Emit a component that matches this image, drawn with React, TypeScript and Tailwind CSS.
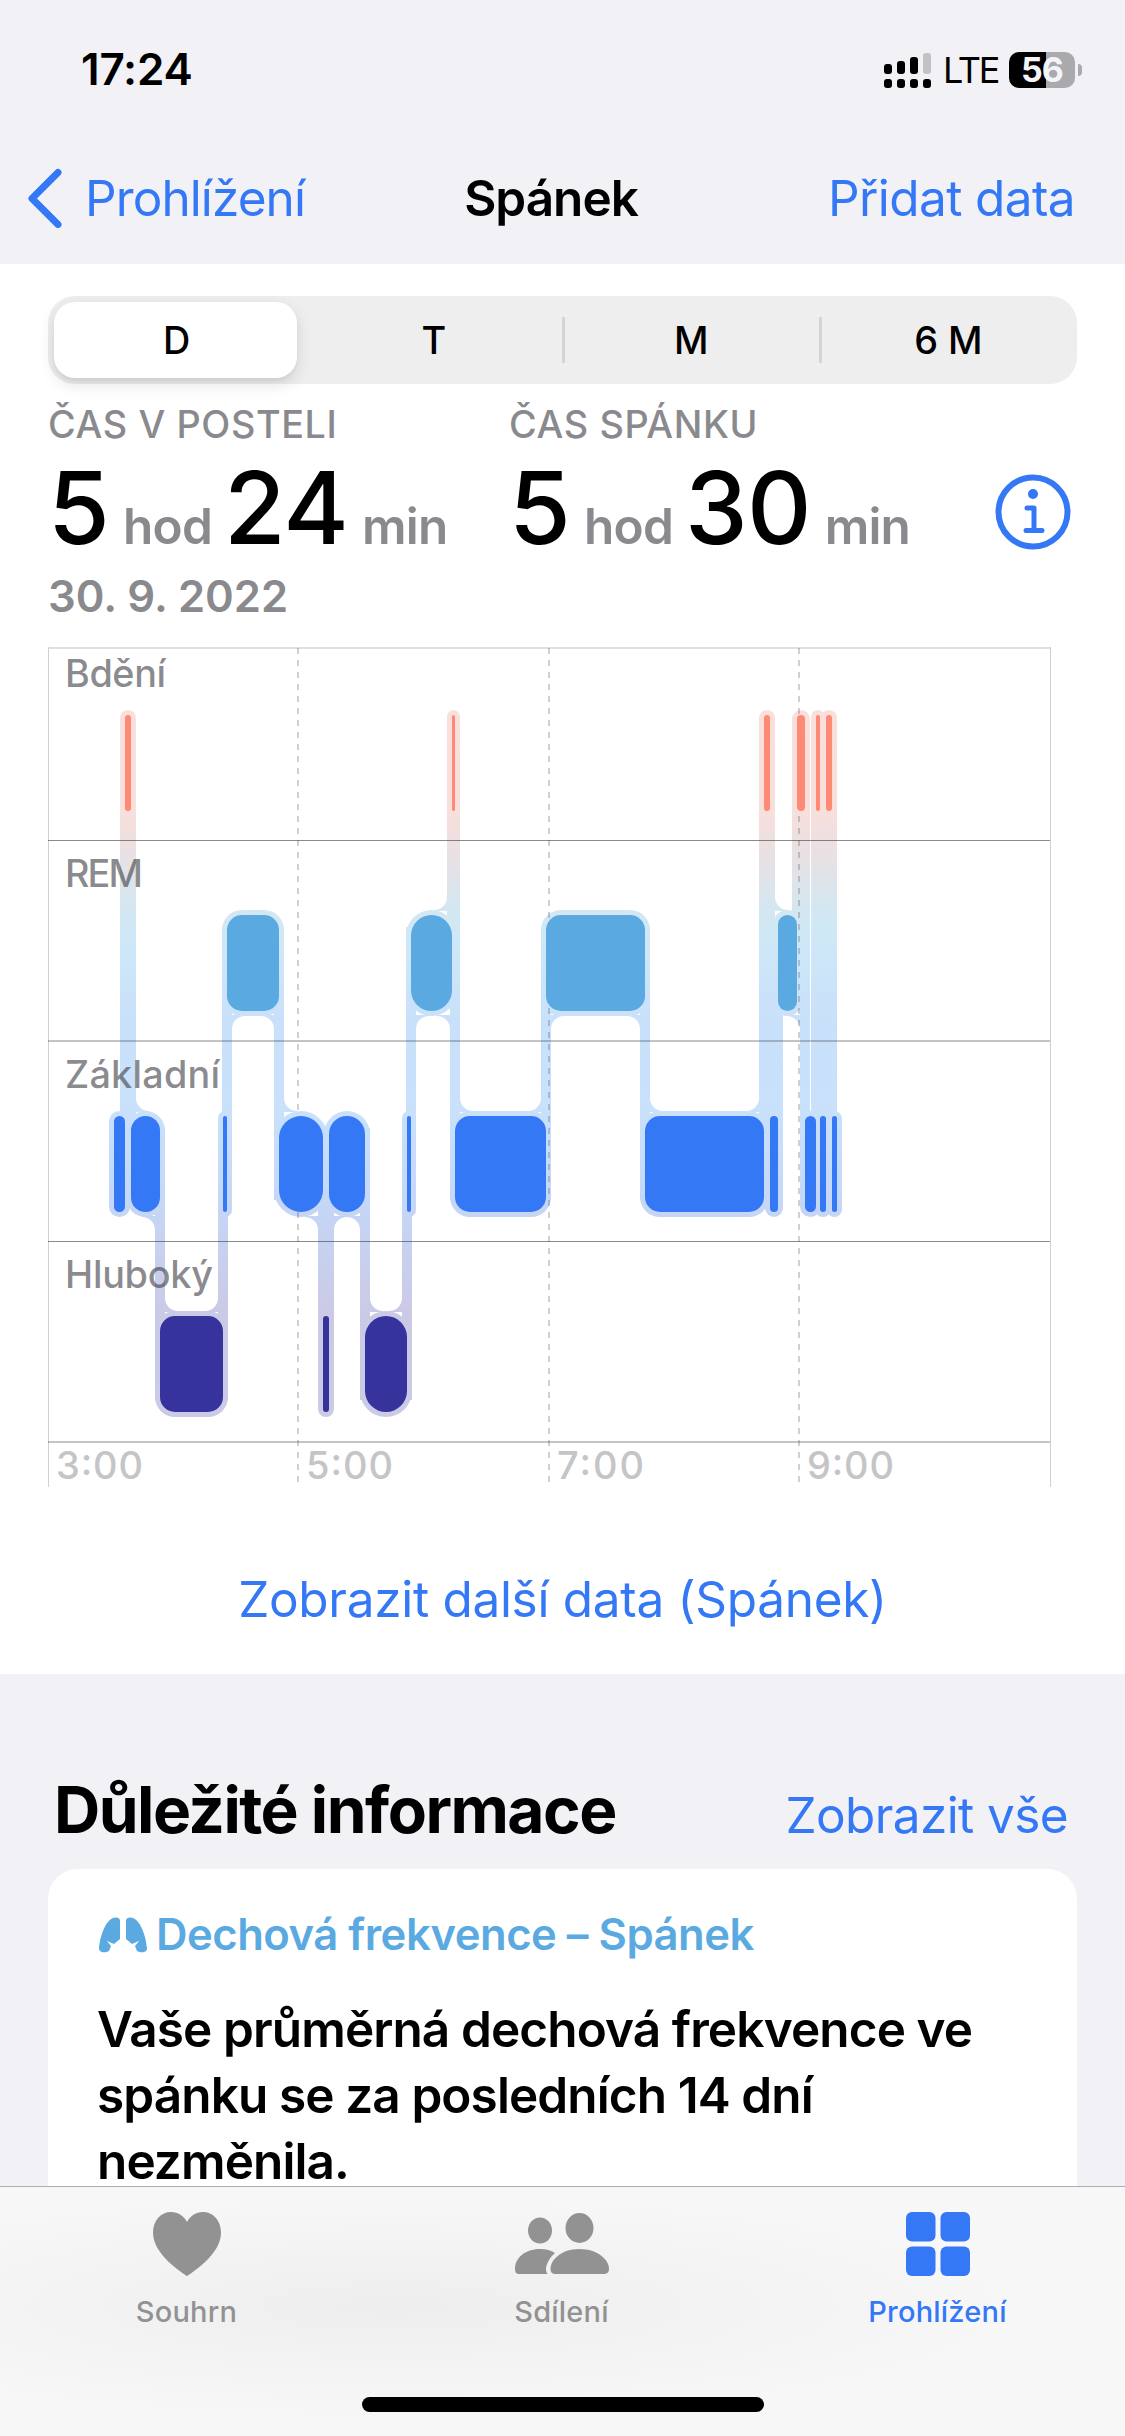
import type { ReactNode } from "react";

type Stage = "awake" | "rem" | "core" | "deep";

const stageTop: Record<Stage, number> = { awake: 68, rem: 268, core: 469, deep: 669 };
const stageColor: Record<Stage, string> = {
  awake: "#fe8a75",
  rem: "#5aaae1",
  core: "#3478f6",
  deep: "#36349c",
};

const BAR_H = 96;
const HALO = 5;
const FILLET = 13;

// stage, start x, end x
const segments: [Stage, number, number][] = [
  ["core", 66, 77],
  ["awake", 77, 83],
  ["core", 83, 112],
  ["deep", 112, 175],
  ["core", 175, 179],
  ["rem", 179, 231],
  ["core", 231, 275],
  ["deep", 275, 281],
  ["core", 281, 317],
  ["deep", 317, 359],
  ["core", 359, 363],
  ["rem", 363, 404],
  ["awake", 404, 407],
  ["core", 407, 498],
  ["rem", 498, 597],
  ["core", 597, 716],
  ["awake", 716, 722],
  ["core", 722, 730],
  ["rem", 730, 749],
  ["awake", 749, 757],
  ["core", 757, 768],
  ["awake", 768, 772],
  ["core", 772, 778],
  ["awake", 778, 784],
  ["core", 784, 789],
];

// inner corners: x, y, horizontal and vertical direction of the open side
const fillets: [number, number, number, number][] = [
  [88, 464, 1, -1],
  [107, 570, -1, 1],
  [117, 664, 1, -1],
  [170, 664, -1, -1],
  [184, 369, 1, 1],
  [226, 369, -1, 1],
  [236, 464, 1, -1],
  [270, 570, -1, 1],
  [286, 570, 1, 1],
  [312, 570, -1, 1],
  [322, 664, 1, -1],
  [354, 664, -1, -1],
  [368, 369, 1, 1],
  [402, 369, -1, 1],
  [399, 263, -1, -1],
  [412, 464, 1, -1],
  [493, 464, -1, -1],
  [503, 369, 1, 1],
  [592, 369, -1, 1],
  [602, 464, 1, -1],
  [711, 464, -1, -1],
  [727, 263, 1, -1],
  [752, 369, -1, 1],
];

const stageLabels = [
  { y: 40, width: 101, label: "Bdění" },
  { y: 240, width: 78, label: "REM" },
  { y: 441, width: 155, label: "Základní" },
  { y: 641, width: 148, label: "Hluboký" },
];

const hours = [
  { x: 8, label: "3:00" },
  { x: 258, label: "5:00" },
  { x: 509, label: "7:00" },
  { x: 759, label: "9:00" },
];

const ranges = ["D", "T", "M", "6 M"];

const totals = [
  { label: "ČAS V POSTELI", hours: "5", minutes: "24" },
  { label: "ČAS SPÁNKU", hours: "5", minutes: "30" },
];

function barRadius(width: number) {
  return width < 46 ? width / 2 : 15;
}

function filletPath([x, y, dx, dy]: [number, number, number, number]) {
  const sweep = dx * dy > 0 ? 0 : 1;
  return `M${x - dx} ${y - dy}V${y + dy * FILLET}H${x}A${FILLET} ${FILLET} 0 0 ${1 - sweep} ${x + dx * FILLET} ${y}V${y - dy}Z`;
}

function SleepChart() {
  return (
    <svg
      width="1003"
      height="842"
      viewBox="0 0 1003 842"
      className="block font-['Inter',sans-serif]"
      aria-label="Fáze spánku"
    >
      <defs>
        <linearGradient id="halo" gradientUnits="userSpaceOnUse" x1="0" y1="63" x2="0" y2="770">
          <stop offset="0" stopColor="#fadfdb" />
          <stop offset="0.14" stopColor="#f8dfdb" />
          <stop offset="0.2" stopColor="#eae0e3" />
          <stop offset="0.24" stopColor="#dfe4ea" />
          <stop offset="0.28" stopColor="#d3e7f1" />
          <stop offset="0.32" stopColor="#cfe8f7" />
          <stop offset="0.38" stopColor="#cce4f9" />
          <stop offset="0.44" stopColor="#c9e0fa" />
          <stop offset="0.56" stopColor="#c9e1fb" />
          <stop offset="0.66" stopColor="#c5dafa" />
          <stop offset="0.76" stopColor="#c7d1f0" />
          <stop offset="0.85" stopColor="#cbcae6" />
          <stop offset="1" stopColor="#cbcae7" />
        </linearGradient>
      </defs>

      <g fill="none">
        <path d="M0 1H1002" stroke="#e0e0e1" strokeWidth="2" />
        <path d="M0.5 0V840" stroke="#d1d1d4" />
        <path d="M1002.5 0V840" stroke="#d1d1d4" />
      </g>

      <g fill="url(#halo)">
        {segments.map(([stage, x0, x1]) => (
          <rect
            key={x0}
            x={x0 - HALO}
            y={stageTop[stage] - HALO}
            width={x1 - x0 + HALO * 2}
            height={BAR_H + HALO * 2}
            rx={barRadius(x1 - x0) + HALO}
          />
        ))}
        {segments.slice(1).map(([stage, x0], i) => {
          const a = stageTop[segments[i][0]];
          const b = stageTop[stage];
          const top = Math.min(a, b) + 12;
          const bottom = Math.max(a, b) + BAR_H - 12;
          return (
            <rect key={x0} x={x0 - HALO} y={top} width={HALO * 2} height={bottom - top} />
          );
        })}
        {fillets.map((f) => (
          <path key={`${f[0]}-${f[1]}`} d={filletPath(f)} />
        ))}
      </g>

      <g stroke="#3c3c43" strokeOpacity="0.24" strokeWidth="2" strokeDasharray="6 6">
        <path d="M250 1V835" />
        <path d="M501 1V835" />
        <path d="M751 1V835" />
      </g>
      <g stroke="#3c3c43">
        <path d="M0 193.5H1002" strokeOpacity="0.6" />
        <path d="M0 394H1002" strokeOpacity="0.3" strokeWidth="2" />
        <path d="M0 594.5H1002" strokeOpacity="0.6" />
        <path d="M0 795H1002" strokeOpacity="0.3" strokeWidth="2" />
      </g>

      {segments.map(([stage, x0, x1]) => (
        <rect
          key={x0}
          x={x0}
          y={stageTop[stage]}
          width={x1 - x0}
          height={BAR_H}
          rx={barRadius(x1 - x0)}
          fill={stageColor[stage]}
        />
      ))}

      <g fill="#3c3c43" fillOpacity="0.6" fontSize="37.8" fontWeight="500">
        {stageLabels.map((s) => (
          <text key={s.label} x="17" y={s.y} textLength={s.width}>
            {s.label}
          </text>
        ))}
      </g>
      <g fill="#c5c5c7" fontSize="38" fontWeight="500">
        {hours.map((h) => (
          <text key={h.label} x={h.x} y="832" textLength="87">
            {h.label}
          </text>
        ))}
      </g>
    </svg>
  );
}

function StatusBar() {
  return (
    <div className="flex h-[138px] items-start justify-between pt-[44px] pr-[43px] pl-[81px]">
      <span className="text-[44px] leading-[50px] font-semibold tracking-[-0.2px]">17:24</span>
      <div className="flex items-center">
        <svg width="48" height="50" viewBox="0 0 48 50" className="block">
          <rect x="0" y="19" width="8" height="10" rx="3" />
          <rect x="13" y="16" width="8" height="13" rx="3" />
          <rect x="26" y="12" width="8" height="17" rx="3" />
          <rect x="39" y="8" width="8" height="21" rx="3" fill="#c2c1c6" />
          <rect x="0" y="34" width="8" height="9" rx="3" />
          <rect x="13" y="34" width="8" height="9" rx="3" />
          <rect x="26" y="34" width="8" height="9" rx="3" />
          <rect x="39" y="34" width="8" height="9" rx="3" />
        </svg>
        <span className="ml-[11px] w-[66px] text-[36px] leading-[52px] tracking-[-2.2px]">LTE</span>
        <div className="flex h-[36px] w-[66px] items-center justify-center rounded-[10px] bg-linear-to-r from-black from-[56%] to-[#a9a9ae] to-[56%] text-[34px] leading-none font-bold tracking-[-1px] text-[#f4f4f7]">
          56
        </div>
        <span className="ml-[3px] h-[12px] w-[4px] rounded-r-full bg-[#a9a9ae]" />
      </div>
    </div>
  );
}

function NavBar() {
  return (
    <nav className="grid h-[126px] grid-cols-[1fr_auto_1fr] items-start pr-[50px] pl-[27px] text-[49.5px] leading-[120px] text-[#3478f6]">
      <a className="flex items-center">
        <svg width="36" height="60" viewBox="0 0 36 60" fill="none" className="mr-[22px] block">
          <path
            d="M31 4.500L5 30.500L31 56.500"
            stroke="#3478f6"
            strokeWidth="7"
            strokeLinecap="round"
            strokeLinejoin="round"
          />
        </svg>
        <span className="tracking-[-0.9px]">Prohlížení</span>
      </a>
      <h1 className="font-semibold tracking-[-1px] text-black">Spánek</h1>
      <a className="text-right tracking-[-0.6px]">Přidat data</a>
    </nav>
  );
}

function RangePicker() {
  return (
    <div className="mx-[48px] grid h-[88px] grid-cols-4 items-center rounded-[27px] bg-[#eeeeef] text-[37.8px] font-medium">
      {ranges.map((r, i) => (
        <div key={r} className="relative flex h-full items-center justify-center">
          {i === 0 && (
            <span className="absolute top-[6px] right-[8px] bottom-[6px] left-[6px] rounded-[21px] bg-white shadow-[0_6px_16px_rgba(0,0,0,0.12),0_3px_3px_rgba(0,0,0,0.04)]" />
          )}
          {i > 1 && <span className="absolute -left-[1px] h-[46px] w-[3px] bg-[#d4d4d6]" />}
          <span className="relative">{r}</span>
        </div>
      ))}
    </div>
  );
}

function Summary() {
  return (
    <section className="relative px-[48px] text-[#8a8a8e]">
      <div className="flex">
        {totals.map((t) => (
          <div key={t.label} className="w-[461px]">
            <p className="pt-[16px] text-[37.8px] leading-[48px] font-medium tracking-[0.6px]">
              {t.label}
            </p>
            <p className="flex h-[97px] items-baseline text-[49.5px] leading-[120px] font-semibold tracking-[-0.8px] whitespace-nowrap">
              <span className="text-[100px] font-medium text-black">{t.hours}</span>
              <span className="ml-[14px]">hod</span>
              <span className="ml-[12px] text-[100px] font-medium text-black">{t.minutes}</span>
              <span className="ml-[14px]">min</span>
            </p>
          </div>
        ))}
      </div>
      <p className="mt-[27px] text-[43.6px] leading-[50px] font-semibold">30. 9. 2022</p>
      <svg
        width="76"
        height="76"
        viewBox="0 0 76 76"
        fill="none"
        stroke="#3478f6"
        className="absolute top-[90px] right-[54px]"
      >
        <circle cx="38" cy="38" r="34.500" strokeWidth="6" />
        <circle cx="38" cy="20" r="5" fill="#3478f6" stroke="none" />
        <path
          d="M32 34H39V56M31 56.500H47"
          strokeWidth="5"
          strokeLinecap="round"
          strokeLinejoin="round"
        />
      </svg>
    </section>
  );
}

function LungsIcon() {
  return (
    <svg width="48" height="36" viewBox="0 0 48 36" className="block">
      <path
        d="M14 1C17 0 21 0 21 4V22L15 27C10 25 9 24 8 24L12 29L10 34C6 36 0 36 0 31C1 20 6 4 14 1Z"
        fill="#5aaae1"
      />
      <path
        d="M34 1C31 0 27 0 27 4V22L33 27C38 25 39 24 40 24L36 29L38 34C42 36 48 36 48 31C47 20 42 4 34 1Z"
        fill="#5aaae1"
      />
    </svg>
  );
}

function Tab({ label, active, children }: { label: string; active?: boolean; children: ReactNode }) {
  return (
    <a
      className={
        active
          ? "flex flex-col items-center text-[#3478f6]"
          : "flex flex-col items-center text-[#929292]"
      }
    >
      {children}
      <span className="mt-[16px] text-[29px] leading-[40px] font-medium tracking-[0.2px]">
        {label}
      </span>
    </a>
  );
}

export default function App() {
  return (
    <div className="flex h-[2436px] w-[1125px] flex-col overflow-hidden bg-[#f1f1f6] font-['Inter',sans-serif] text-black">
      <header>
        <StatusBar />
        <NavBar />
      </header>

      <main className="h-[1922px] overflow-hidden">
        <div className="h-[1410px] bg-white pt-[32px]">
          <RangePicker />
          <Summary />
          <div className="mt-[25px] pl-[48px]">
            <SleepChart />
          </div>
          <p className="mt-[80px] text-center text-[49.5px] leading-[60px] tracking-[-0.3px] text-[#3478f6]">
            Zobrazit další data (Spánek)
          </p>
        </div>

        <div className="flex h-[195px] items-end justify-between pr-[57px] pb-[19px] pl-[54px]">
          <h2 className="text-[64px] leading-[80px] font-bold tracking-[-1.5px]">
            Důležité informace
          </h2>
          <a className="pb-[1px] text-[49.5px] leading-[68px] tracking-[-0.6px] text-[#3478f6]">
            Zobrazit vše
          </a>
        </div>

        <article className="mx-[48px] h-[400px] rounded-t-[30px] bg-white px-[49px] pt-[36px]">
          <div className="flex items-center gap-[9px] pl-[2px] text-[43.6px] leading-[60px] font-semibold tracking-[-0.5px] text-[#5aaae1]">
            <LungsIcon />
            Dechová frekvence – Spánek
          </div>
          <p className="mt-[31px] text-[49.5px] leading-[66px] font-semibold tracking-[-0.9px]">
            Vaše průměrná dechová frekvence ve
            <br />
            spánku se za posledních 14 dní
            <br />
            nezměnila.
          </p>
        </article>
      </main>

      <footer className="flex h-[250px] flex-col justify-between border-t border-[#aeaeb2] bg-[#f6f6f7] bg-radial-[ellipse_at_35%_48%] from-[#eeeeef] to-[#f7f7f8] to-60%">
        <div className="grid grid-cols-[373px_377px_375px] pt-[25px]">
          <Tab label="Souhrn">
            <svg width="68" height="64" viewBox="0 0 68 64" fill="currentColor">
              <path d="M34 64C31 62 0 43 0 21C0 8 8 0 18 0C25 0 31 4 34 10C37 4 43 0 50 0C60 0 68 8 68 21C68 43 37 62 34 64Z" />
            </svg>
          </Tab>
          <Tab label="Sdílení">
            <svg width="94" height="64" viewBox="0 0 94 64" fill="currentColor">
              <ellipse cx="25" cy="18.500" rx="12" ry="13" />
              <ellipse cx="64.500" cy="16" rx="14" ry="15" />
              <path d="M5 62C1 62 0 60 0 57C0 46 10 37 25 37C31 37 36 38.500 40 41C34 46 31 53 31 57C31 59 31.500 61 32.500 62Z" />
              <path d="M41 62C37 62 35.500 60 35.500 57C35.500 48 46 37 64.500 37C83 37 94 48 94 57C94 60 92.500 62 88 62Z" />
            </svg>
          </Tab>
          <Tab label="Prohlížení" active>
            <svg width="64" height="64" viewBox="0 0 64 64" fill="currentColor">
              <rect x="0" y="0" width="29.500" height="29.500" rx="6" />
              <rect x="34.500" y="0" width="29.500" height="29.500" rx="6" />
              <rect x="0" y="34.500" width="29.500" height="29.500" rx="6" />
              <rect x="34.500" y="34.500" width="29.500" height="29.500" rx="6" />
            </svg>
          </Tab>
        </div>
        <div className="mb-[24px] h-[15px] w-[402px] self-center rounded-full bg-black" />
      </footer>
    </div>
  );
}
